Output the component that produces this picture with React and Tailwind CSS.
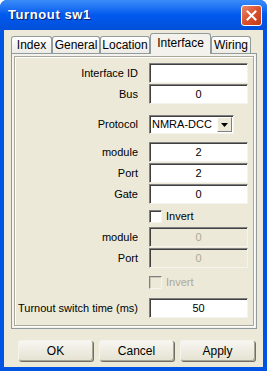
import React from 'react'

const font = { fontFamily: '"Liberation Sans", Arial, sans-serif' }

function Field({ label, value, disabled, mt }) {
  return (
    <div className={`flex items-center ${mt}`}>
      <div className="w-[123px] text-right pr-[1px] whitespace-nowrap">{label}</div>
      <div
        className={`ml-[10px] w-[99px] h-[20px] flex items-center justify-center border border-t-[#808080] border-l-[#808080] border-[#f4f3ee] shadow-[inset_1px_1px_0_#404040] ${
          disabled ? 'bg-[#ece9d8] text-[#aca899]' : 'bg-white text-black'
        }`}
      >
        {value}
      </div>
    </div>
  )
}

function Check({ disabled, mt }) {
  return (
    <div className={`flex items-center h-[14px] ${mt}`}>
      <div className="w-[133px]" />
      <div
        className={`w-[13px] h-[13px] border border-t-[#808080] border-l-[#808080] border-[#f4f3ee] ${
          disabled ? 'bg-[#ece9d8] shadow-[inset_1px_1px_0_#cac8bb]' : 'bg-white shadow-[inset_1px_1px_0_#404040]'
        }`}
      />
      <span className={`ml-[4px] ${disabled ? 'text-[#aca899]' : 'text-black'}`}>Invert</span>
    </div>
  )
}

function Tab({ label, w, active }) {
  return (
    <div
      className={`${w} flex items-center justify-center border border-b-0 border-[#919b9c] rounded-t-[3px] ${
        active
          ? 'h-[21px] bg-[#f3f2ec] -mb-[1px] z-10 relative pb-[3px]'
          : 'h-[17px] bg-gradient-to-b from-white to-[#ecebe5]'
      }`}
    >
      {label}
    </div>
  )
}

export default function App() {
  return (
    <div className="w-[267px] h-[371px] bg-[#0054e3] rounded-t-[7px] flex flex-col text-[11px] text-black overflow-hidden" style={font}>
      <div className="h-[30px] flex items-center justify-between pl-[8px] pr-[5px] bg-gradient-to-b from-[#3a8cf8] via-[#0058ee] to-[#0250d9]">
        <span className="text-white font-bold text-[13px] tracking-[0.6px] [text-shadow:1px_1px_0_#0a1e6c]">
          Turnout sw1
        </span>
        <div className="w-[21px] h-[21px] rounded-[3px] border border-white bg-gradient-to-br from-[#e9866a] via-[#d9502c] to-[#c23a16] flex items-center justify-center">
          <svg width="11" height="11" viewBox="0 0 11 11">
            <path d="M1.5 1.5 L9.5 9.5 M9.5 1.5 L1.5 9.5" stroke="white" strokeWidth="2" strokeLinecap="square" />
          </svg>
        </div>
      </div>
      <div className="flex-1 mx-[4px] mb-[4px] bg-[#ece9d8] flex flex-col">
        <div className="flex items-end pl-[7px] h-[23px] text-[12px]">
          <Tab label="Index" w="w-[41px]" />
          <Tab label="General" w="w-[48px]" />
          <Tab label="Location" w="w-[50px]" />
          <Tab label="Interface" w="w-[61px]" active />
          <Tab label="Wiring" w="w-[40px]" />
        </div>
        <div className="ml-[7px] w-[246px] h-[276px] border border-[#919b9c] bg-[#f3f2ec] p-[2px]">
          <div className="h-full bg-[#ece9d8] border border-[#aca899] shadow-[inset_1px_1px_0_white,1px_1px_0_white] px-[1px] flex flex-col">
            <Field label="Interface ID" value="" mt="mt-[6px]" />
            <Field label="Bus" value="0" mt="mt-[1px]" />
            <div className="flex items-center mt-[11px]">
              <div className="w-[123px] text-right pr-[1px]">Protocol</div>
              <div className="ml-[10px] w-[85px] h-[19px] bg-white border border-t-[#808080] border-l-[#808080] border-[#f4f3ee] shadow-[inset_1px_1px_0_#404040] flex items-center pl-[2px] whitespace-nowrap">
                <span className="flex-1">NMRA-DCC</span>
                <div className="w-[15px] h-[15px] mr-[1px] bg-[#ece9d8] border border-t-white border-l-white border-[#808080] flex items-center justify-center">
                  <svg width="7" height="4" viewBox="0 0 7 4"><path d="M0 0 H7 L3.5 4 Z" fill="black" /></svg>
                </div>
              </div>
            </div>
            <Field label="module" value="2" mt="mt-[8px]" />
            <Field label="Port" value="2" mt="mt-[1px]" />
            <Field label="Gate" value="0" mt="mt-[1px]" />
            <Check mt="mt-[5px]" />
            <Field label="module" value="0" disabled mt="mt-[4px]" />
            <Field label="Port" value="0" disabled mt="mt-[1px]" />
            <Check disabled mt="mt-[7px]" />
            <Field label="Turnout switch time (ms)" value="50" mt="mt-[9px]" />
          </div>
        </div>
        <div className="flex gap-[6px] pl-[14px] mt-[11px]">
          {['OK', 'Cancel', 'Apply'].map((b) => (
            <div
              key={b}
              className="w-[75px] h-[21px] rounded-[3px] border border-[#a7a595] border-t-[#f4f3ee] border-l-[#f4f3ee] bg-gradient-to-b from-[#f7f6f1] to-[#e6e3d3] shadow-[1px_1px_0_#716f64] flex items-center justify-center text-[12px]"
            >
              {b}
            </div>
          ))}
        </div>
      </div>
    </div>
  )
}
